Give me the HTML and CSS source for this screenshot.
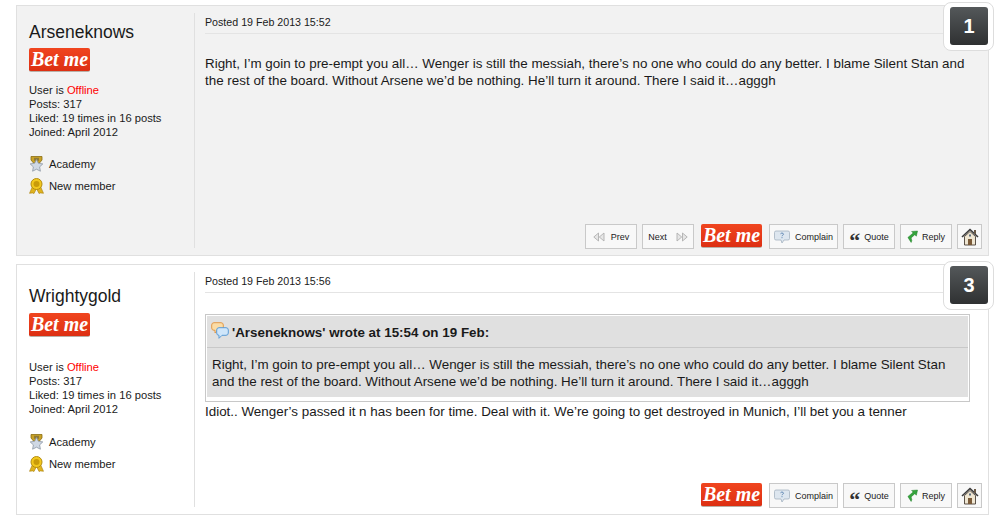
FILE: index.html
```html
<!DOCTYPE html>
<html lang="en">
<head>
    <meta charset="UTF-8">
    <title>Forum thread</title>
    <link rel="stylesheet" href="styles.css">
</head>
<body>
    <svg class="defs" width="0" height="0">
        <symbol id="star" viewBox="0 0 15 16">
            <path d="M2 .5h11v3.500l-2.500 3h-6L2 4z" fill="#c9a227" stroke="#8a6d12" stroke-width=".8"/>
            <path d="M5 1.800h5v3H5z" fill="#8f7a35"/>
            <path d="M7.500 3.500l1.900 3.800 4.400.6-3.200 3 .8 4.300-3.900-2-3.900 2 .8-4.300-3.200-3 4.400-.6z" fill="#cfd8e4" stroke="#8d97a5" stroke-width=".8"/>
        </symbol>
        <symbol id="medal" viewBox="0 0 15 16">
            <path d="M3.500 8.500L.5 15.300l3-.4L5 15.500l2.500-5 2.500 5 1.500-.6 3 .4-3-6.800z" fill="#e0b31f" stroke="#a8800f" stroke-width=".6"/>
            <circle cx="7.500" cy="6" r="5.500" fill="#f2c81e" stroke="#b58d10" stroke-width="1"/>
            <circle cx="7.500" cy="6" r="3" fill="#c99b0a"/>
        </symbol>
        <symbol id="complain" viewBox="0 0 16 14">
            <path d="M2 1h12a1.500 1.500 0 0 1 1.500 1.500v6A1.500 1.500 0 0 1 14 10h-4l-2 3-1-3H2A1.500 1.500 0 0 1 .5 8.500v-6A1.500 1.500 0 0 1 2 1z" fill="#dde6ef" stroke="#a5b2c0" stroke-width=".8"/>
            <path d="M6.500 3.800c.3-1 3-1 3 .4 0 1-1.500 1-1.500 2M8 7.200v1" fill="none" stroke="#5f87b3" stroke-width="1"/>
        </symbol>
        <symbol id="reply" viewBox="0 0 12 14">
            <path d="M11.500 1L5 1.500l1.700 1.700L1 8l3.500 5.500.8-1.800L4.500 8.500 8.500 5l1.700 1.700z" fill="#35a43c" stroke="#1d7a25" stroke-width=".5"/>
        </symbol>
        <symbol id="home" viewBox="0 0 18 18">
            <path d="M1 9l8-7.500L17 9" fill="none" stroke="#3a3a3a" stroke-width="1.600"/>
            <path d="M13 2h2v4h-2z" fill="#6a5a48"/>
            <path d="M3.500 8.500L9 3.500l5.500 5V17h-11z" fill="#efe6d2" stroke="#4a4036" stroke-width=".9"/>
            <path d="M7 11h4v6H7z" fill="#7a5a38"/>
            <path d="M8 6.500h2v2H8z" fill="#5d6d7d"/>
        </symbol>
        <symbol id="bubbles" viewBox="0 0 18 17">
            <path d="M3 .7h7a2.300 2.300 0 0 1 2.300 2.300v3A2.300 2.300 0 0 1 10 8.300H7L4 11V8.300H3A2.300 2.300 0 0 1 .7 6V3A2.300 2.300 0 0 1 3 .7z" fill="#fbdca6" stroke="#e29a4a" stroke-width="1"/>
            <path d="M8 5.700h7a2.300 2.300 0 0 1 2.300 2.300v3a2.300 2.300 0 0 1-2.300 2.300h-4l-3 3v-3a2.300 2.300 0 0 1-2.300-2.300V8A2.300 2.300 0 0 1 8 5.700z" fill="#cfe6fa" stroke="#5b9bd5" stroke-width="1"/>
        </symbol>
        <symbol id="rewind" viewBox="0 0 12 10">
            <path d="M5.500 1v8L.8 5zM11 1v8L6.300 5z" fill="#e6e6e6" stroke="#b0b0b0" stroke-width=".9"/>
        </symbol>
        <symbol id="forward" viewBox="0 0 12 10">
            <path d="M1 1v8l4.700-4zM6.500 1v8L11.200 5z" fill="#e6e6e6" stroke="#b0b0b0" stroke-width=".9"/>
        </symbol>
    </svg>

    <div class="post post-grey">
        <div class="post-count">
            <span class="post-num">1</span>
        </div>
        <div class="author author-first">
            <h2 class="author-name">Arseneknows</h2>
            <a class="bet-btn">Bet me</a>
            <p class="author-info">User is <span class="offline">Offline</span><br>Posts: 317<br>Liked: 19 times in 16 posts<br>Joined: April 2012</p>
            <ul class="awards">
                <li><svg class="award-icon"><use href="#star"/></svg>Academy</li>
                <li><svg class="award-icon"><use href="#medal"/></svg>New member</li>
            </ul>
        </div>
        <div class="post-main">
            <div class="posted">Posted 19 Feb 2013 15:52</div>
            <div class="post-body">
                <p class="post-text post-text-first">Right, I’m goin to pre-empt you all… Wenger is still the messiah, there’s no one who could do any better. I blame Silent Stan and the rest of the board. Without Arsene we’d be nothing. He’ll turn it around. There I said it…agggh</p>
            </div>
            <div class="actions">
                <a class="btn btn-nav"><svg class="nav-icon nav-prev"><use href="#rewind"/></svg>Prev</a>
                <a class="btn btn-nav">Next<svg class="nav-icon nav-next"><use href="#forward"/></svg></a>
                <a class="bet-btn">Bet me</a>
                <a class="btn btn-complain"><svg class="btn-icon"><use href="#complain"/></svg>Complain</a>
                <a class="btn btn-quote"><span class="quote-mark">“</span>Quote</a>
                <a class="btn btn-reply"><svg class="reply-icon"><use href="#reply"/></svg>Reply</a>
                <a class="btn btn-home"><svg class="home-icon"><use href="#home"/></svg></a>
            </div>
        </div>
    </div>

    <div class="post post-white">
        <div class="post-count">
            <span class="post-num">3</span>
        </div>
        <div class="author author-second">
            <h2 class="author-name">Wrightygold</h2>
            <a class="bet-btn">Bet me</a>
            <p class="author-info">User is <span class="offline">Offline</span><br>Posts: 317<br>Liked: 19 times in 16 posts<br>Joined: April 2012</p>
            <ul class="awards">
                <li><svg class="award-icon"><use href="#star"/></svg>Academy</li>
                <li><svg class="award-icon"><use href="#medal"/></svg>New member</li>
            </ul>
        </div>
        <div class="post-main">
            <div class="posted">Posted 19 Feb 2013 15:56</div>
            <div class="post-body">
                <div class="quote">
                    <div class="quote-head"><svg class="quote-icon"><use href="#bubbles"/></svg>'Arseneknows' wrote at 15:54 on 19 Feb:</div>
                    <div class="quote-text">Right, I’m goin to pre-empt you all… Wenger is still the messiah, there’s no one who could do any better. I blame Silent Stan and the rest of the board. Without Arsene we’d be nothing. He’ll turn it around. There I said it…agggh</div>
                </div>
                <p class="post-text">Idiot.. Wenger’s passed it n has been for time. Deal with it. We’re going to get destroyed in Munich, I’ll bet you a tenner</p>
            </div>
            <div class="actions">
                <a class="bet-btn">Bet me</a>
                <a class="btn btn-complain"><svg class="btn-icon"><use href="#complain"/></svg>Complain</a>
                <a class="btn btn-quote"><span class="quote-mark">“</span>Quote</a>
                <a class="btn btn-reply"><svg class="reply-icon"><use href="#reply"/></svg>Reply</a>
                <a class="btn btn-home"><svg class="home-icon"><use href="#home"/></svg></a>
            </div>
        </div>
    </div>
</body>
</html>
```

FILE: styles.css
```css
html, body {
    margin: 0;
    padding: 0;
}
body {
    width: 1004px;
    height: 520px;
    overflow: hidden;
    background: #ffffff;
    font-family: "Liberation Sans", Arial, sans-serif;
    color: #1a1a1a;
    padding-top: 5px;
    box-sizing: border-box;
}
.defs {
    position: absolute;
}
.post {
    position: relative;
    box-sizing: border-box;
    width: 973px;
    height: 251px;
    margin-left: 16px;
    padding: 7px 6px 7px 0;
    border: 1px solid #e0e0e0;
    display: flex;
}
.post-grey {
    background: #f2f2f2;
}
.post-white {
    background: #ffffff;
    margin-top: 8px;
}
.post-count {
    position: absolute;
    top: -4px;
    right: -6px;
    width: 38px;
    height: 38px;
    padding: 4px 5px 5px 6px;
    background: #ffffff;
    border: 1px solid #dddddd;
    border-radius: 8px;
}
.post-num {
    display: block;
    width: 38px;
    height: 38px;
    line-height: 38px;
    text-align: center;
    border-radius: 3px;
    background: linear-gradient(#54585a, #2f3132);
    color: #ffffff;
    font-size: 20px;
    font-weight: bold;
}
.author {
    box-sizing: border-box;
    width: 178px;
    flex: none;
    padding-left: 12px;
    border-right: 1px solid #e0e0e0;
}
.author-first {
    padding-top: 9px;
}
.author-second {
    padding-top: 14px;
}
.author-name {
    margin: 0;
    font-size: 17.5px;
    font-weight: normal;
    line-height: 21px;
}
.author-first .author-name {
    margin-bottom: 5px;
}
.author-second .author-name {
    margin-bottom: 6px;
}
.bet-btn {
    box-sizing: border-box;
    display: block;
    width: 61px;
    height: 24px;
    line-height: 22px;
    text-align: center;
    border-radius: 2px;
    background: linear-gradient(#f0451f, #dd2f12);
    border-bottom: 1px solid #b9b0a8;
    color: #ffffff;
    font-family: "Liberation Serif", serif;
    font-size: 20px;
    font-style: italic;
    font-weight: bold;
    white-space: nowrap;
}
.author-info {
    margin: 11px 0 0;
    font-size: 11.2px;
    line-height: 14px;
}
.author-second .author-info {
    margin-top: 23px;
}
.offline {
    color: #ff0000;
}
.awards {
    list-style: none;
    margin: 14px 0 0;
    padding: 0;
    font-size: 11.2px;
}
.author-second .awards {
    margin-top: 15px;
}
.awards li {
    display: flex;
    align-items: center;
    height: 22px;
}
.award-icon {
    width: 15px;
    height: 16px;
    margin-right: 5px;
}
.post-main {
    flex: 1;
    padding-left: 10px;
    display: flex;
    flex-direction: column;
}
.posted {
    height: 20px;
    line-height: 18px;
    font-size: 10.66px;
    border-bottom: 1px solid #e4e4e4;
    flex: none;
}
.post-body {
    flex: 1;
    font-size: 13.4px;
    line-height: 17px;
}
.post-text {
    margin: 0;
    padding-top: 1px;
}
.post-text-first {
    padding-top: 21px;
}
.quote {
    box-sizing: border-box;
    margin-top: 21px;
    width: 765px;
    height: 88px;
    border: 1px solid #c8c8c8;
    padding: 1px 1px 4px;
    background: #ffffff;
}
.quote-head {
    box-sizing: border-box;
    height: 32px;
    display: flex;
    align-items: center;
    padding: 1px 0 0 4px;
    background: #e0e0e0;
    border-bottom: 1px solid #c8c8c8;
    font-weight: bold;
}
.quote-icon {
    width: 18px;
    height: 17px;
    margin-right: 3px;
    margin-top: -4px;
}
.quote-text {
    box-sizing: border-box;
    height: 49px;
    padding: 8px 5px 0;
    background: #e0e0e0;
}
.actions {
    flex: none;
    display: flex;
    justify-content: flex-end;
    gap: 5px;
    height: 24px;
}
.actions .bet-btn {
    margin: 0 2px;
}
.btn {
    box-sizing: border-box;
    height: 25px;
    display: flex;
    align-items: center;
    justify-content: center;
    background: #f8f8f8;
    border: 1px solid #c9c9c9;
    font-size: 9px;
    color: #222222;
}
.btn-nav {
    width: 52px;
}
.nav-icon {
    width: 12px;
    height: 10px;
}
.nav-prev {
    margin-right: 6px;
}
.nav-next {
    margin-left: 9px;
}
.btn-complain {
    width: 69px;
}
.btn-icon {
    width: 16px;
    height: 14px;
    margin-right: 5px;
}
.btn-quote {
    width: 52px;
}
.quote-mark {
    font-family: "Liberation Serif", serif;
    font-size: 22px;
    font-weight: bold;
    line-height: 24px;
    height: 15px;
    margin-right: 4px;
    color: #333333;
}
.btn-reply {
    width: 52px;
}
.reply-icon {
    width: 11px;
    height: 13px;
    margin-right: 4px;
}
.btn-home {
    width: 25px;
}
.home-icon {
    width: 18px;
    height: 18px;
}
```
